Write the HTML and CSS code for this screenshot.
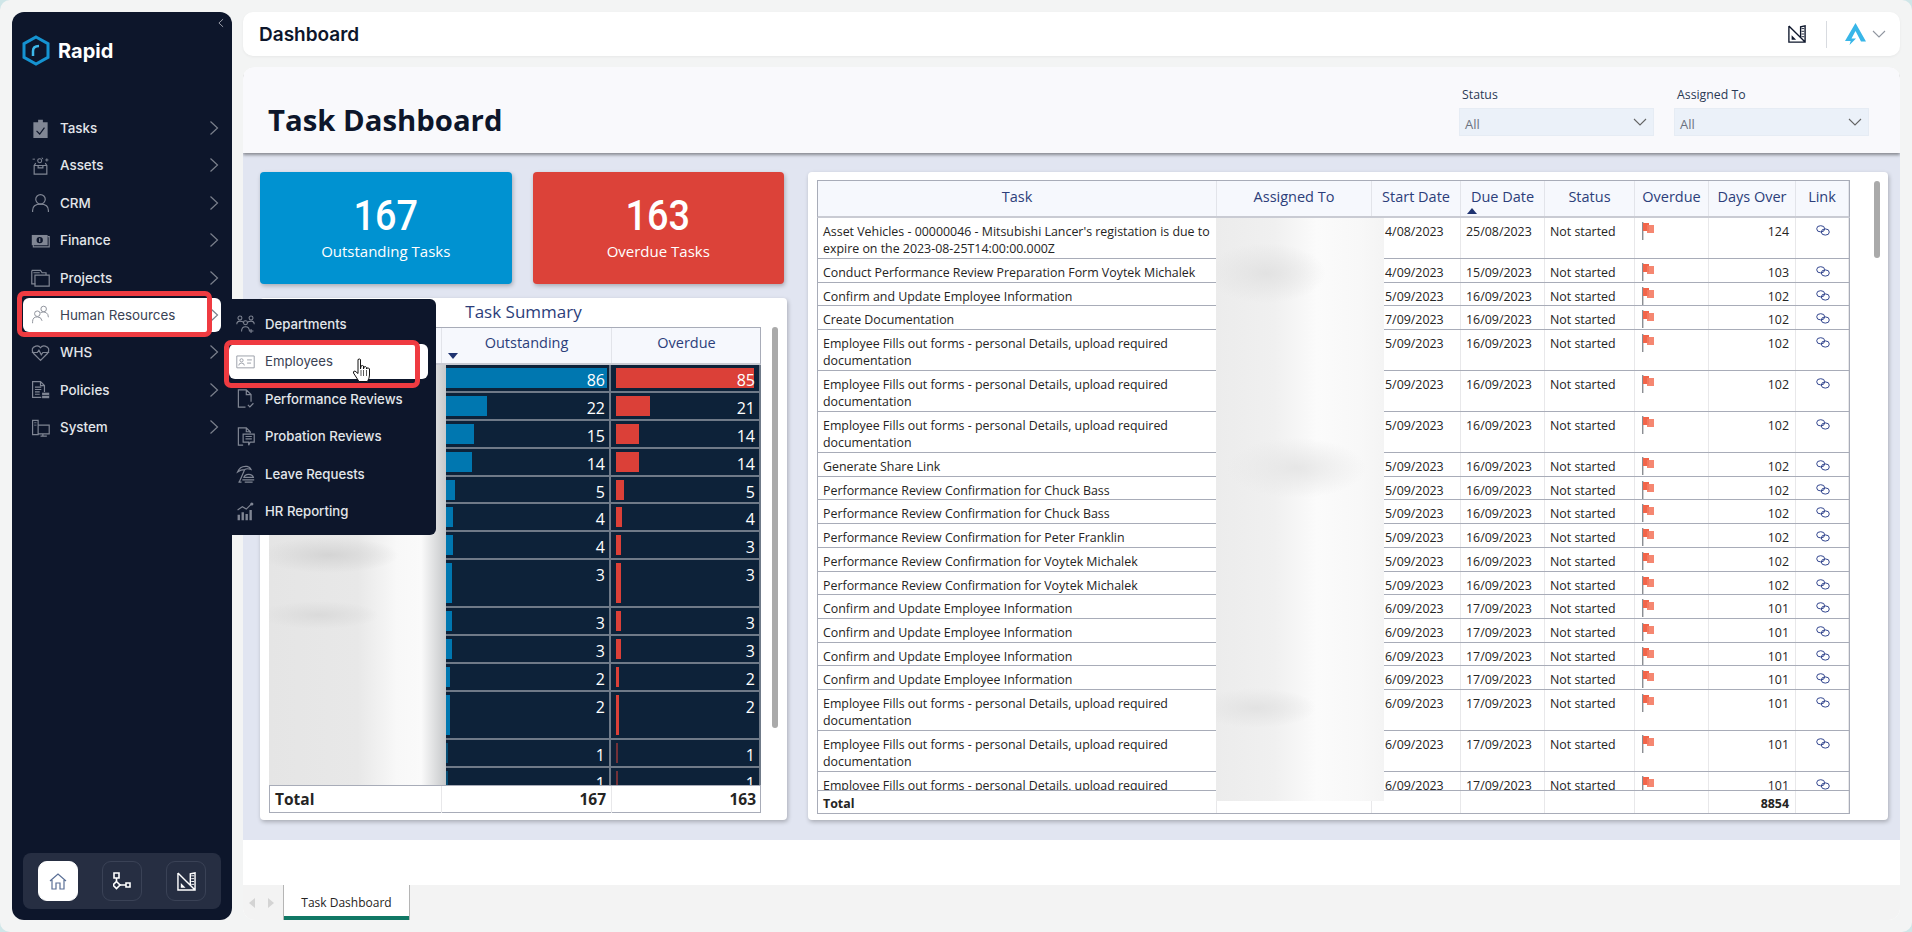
FILE: index.html
```html
<!DOCTYPE html>
<html lang="en">
<head>
    <meta charset="UTF-8">
    <title>Task Dashboard</title>
    <link rel="stylesheet" href="styles.css">
</head>
<body>
    <!-- icons used many times -->
    <svg class="defs" width="0" height="0">
        <symbol id="chev" viewBox="0 0 10 16"><path d="M1.5 1.5 8.5 8l-7 6.5" fill="none" stroke="currentColor" stroke-width="1.2"/></symbol>
        <symbol id="flag" viewBox="0 0 13 18"><path d="M.8 0v18" stroke="#5a5f66" stroke-width="1"/><path d="M1 1h6v8H1z" fill="#f2654a"/><path d="M5 3h7v8H5z" fill="#f47a62" opacity=".9"/></symbol>
        <symbol id="link" viewBox="0 0 14 11"><g fill="none" stroke="#34478f" stroke-width="1"><ellipse cx="4.7" cy="3.8" rx="4" ry="3.1"/><ellipse cx="9.3" cy="7" rx="4" ry="3.1"/></g></symbol>
        <symbol id="ruler" viewBox="0 0 20 20"><path d="M1 1v18h18V1l-5 1v12M1 1l18 18" fill="none" stroke="currentColor" stroke-width="1.5"/><path d="M4 16.500v-5l5 5z" fill="currentColor"/><path d="M15 4h3M15 7h3M15 10h3M15 13h3" stroke="currentColor" stroke-width="1"/></symbol>
        <symbol id="down" viewBox="0 0 14 8"><path d="M1 1l6 6 6-6" fill="none" stroke="currentColor" stroke-width="1.1"/></symbol>
    </svg>

    <div class="app">
        <aside class="sidebar">
            <svg class="collapse" width="6" height="10"><use href="#chev" transform="matrix(-1 0 0 1 6 0)"/></svg>
            <div class="brand">
                <svg width="28" height="31" viewBox="0 0 28 31"><path d="M14 2 26 8.700v13.600L14 29 2 22.300V8.700z" fill="none" stroke="#1593d1" stroke-width="3"/><path d="M11 21v-5q0-5 6-5" fill="none" stroke="#3db8ea" stroke-width="2.500"/></svg>
                <span>Rapid</span>
            </div>
            <nav class="nav">
                <a class="nav-item"><svg class="ico" viewBox="0 0 24 24"><path d="M3 4h6V1h6v3h6v20H3z" fill="#808694"/><path d="M7 15l4 4 6-8" fill="none" stroke="#0d162b" stroke-width="1.500"/></svg><span>Tasks</span><svg class="chev"><use href="#chev"/></svg></a>
                <a class="nav-item"><svg class="ico" viewBox="0 0 24 24"><path d="M4 12h16v11H4zM4 12l2-3M20 12l-2-3M9 12v3h6v-3" fill="none" stroke="#808694" stroke-width="1.500"/><circle cx="11" cy="6" r="2.500" fill="none" stroke="#808694" stroke-width="1.300"/><path d="M2 4h3M20 3v4M18 5h4M14 2l1 2" stroke="#808694" stroke-width="1.200"/></svg><span>Assets</span><svg class="chev"><use href="#chev"/></svg></a>
                <a class="nav-item"><svg class="ico" viewBox="0 0 24 24"><circle cx="12" cy="8" r="6" fill="none" stroke="#808694" stroke-width="1.500"/><path d="M2 24v-2q0-8 10-8t10 8v2" fill="none" stroke="#808694" stroke-width="1.500"/></svg><span>CRM</span><svg class="chev"><use href="#chev"/></svg></a>
                <a class="nav-item"><svg class="ico" viewBox="0 0 24 24"><path d="M1 5h20v13H1z" fill="#808694"/><path d="M3 18v2h20V7h-2" fill="none" stroke="#808694" stroke-width="1.500"/><ellipse cx="11" cy="11.500" rx="4" ry="4" fill="#0d162b"/><path d="M11 9v5" stroke="#808694" stroke-width="1.500"/></svg><span>Finance</span><svg class="chev"><use href="#chev"/></svg></a>
                <a class="nav-item"><svg class="ico" viewBox="0 0 24 24"><path d="M1 3h11l2 3h5v3M1 3v17h5M5 9h18v14H5zM3 6h8" fill="none" stroke="#808694" stroke-width="1.500"/></svg><span>Projects</span><svg class="chev"><use href="#chev"/></svg></a>
                <a class="nav-item active"><svg class="ico" viewBox="0 0 24 24"><g fill="none" stroke="#8b8f99" stroke-width="1.200"><circle cx="8" cy="11" r="3.500"/><path d="M2 23v-2q0-6 6-6 5 0 6 5"/><circle cx="16" cy="5" r="3.500"/><path d="M12 9.500q4-1.500 7 0 3 2 3 6"/></g></svg><span>Human Resources</span><svg class="chev"><use href="#chev"/></svg><i class="mark"></i></a>
                <a class="nav-item"><svg class="ico" viewBox="0 0 24 24"><path d="M12 22 3 13Q-1 6 6 4q4-1 6 2 2-3 6-2 7 2 3 9z" fill="none" stroke="#808694" stroke-width="1.500"/><path d="M1 12h7l2-3 3 6 2-3h8" fill="none" stroke="#808694" stroke-width="1.500"/></svg><span>WHS</span><svg class="chev"><use href="#chev"/></svg></a>
                <a class="nav-item"><svg class="ico" viewBox="0 0 24 24"><path d="M13 22H2V2h10l5 5v8M12 2v5h5" fill="none" stroke="#808694" stroke-width="1.500"/><path d="M5 9h8M5 12h8M5 15h6M5 18h6" stroke="#808694" stroke-width="1.300"/><path d="M14 16h9v7h-9z" fill="#808694"/><path d="M14 19.500h9" stroke="#0d162b"/></svg><span>Policies</span><svg class="chev"><use href="#chev"/></svg></a>
                <a class="nav-item"><svg class="ico" viewBox="0 0 24 24"><path d="M2 3h7v18H2zM9 9h14v11H9zM12 23h8M15 20v3" fill="none" stroke="#808694" stroke-width="1.500"/><path d="M4 6h3M4 9h3" stroke="#808694"/></svg><span>System</span><svg class="chev"><use href="#chev"/></svg></a>
            </nav>
            <div class="dock">
                <a class="dock-btn current"><svg width="18" height="17" viewBox="0 0 18 17"><path d="M1 8 9 1l8 7M3 7v9h4v-6h4v6h4V7" fill="none" stroke="#5a6f96" stroke-width="1.200"/></svg></a>
                <a class="dock-btn"><svg width="18" height="18" viewBox="0 0 18 18"><g fill="none" stroke="#fff" stroke-width="1.600"><path d="M1 1h5v5H1zM13 11h4v4h-4zM3.500 6v3M6.500 13H13"/><path d="M3.500 9.500 7 13l-3.500 3.500L0 13z"/></g></svg></a>
                <a class="dock-btn"><svg class="ruler" width="19" height="19"><use href="#ruler"/></svg></a>
            </div>
        </aside>

        <div class="flyout">
            <a class="fly-item"><svg class="ico" viewBox="0 0 24 24"><g fill="none" stroke="#808694" stroke-width="1.300"><circle cx="5" cy="5" r="2.500"/><circle cx="19" cy="5" r="2.500"/><circle cx="12" cy="11" r="2.500"/><path d="M1 13q0-4 4-4 3 0 5 2M23 13q0-4-4-4-3 0-5 2M7 22q0-6 5-6t5 6M19 19v5M17 21.500h5"/></g></svg><span>Departments</span></a>
            <a class="fly-item active"><svg class="ico" viewBox="0 0 24 24"><g fill="none" stroke="#9a9ea8" stroke-width="1.200"><path d="M1 5h22v15H1z"/><circle cx="7" cy="10.500" r="2"/><path d="M3.500 17q0-3 3.500-3t3.500 3M14 10h6M14 14h5"/></g></svg><span>Employees</span><i class="mark"></i></a>
            <a class="fly-item"><svg class="ico" viewBox="0 0 24 24"><path d="M12 23H3V1h10l6 6v9M13 1v6h6M15 20l2.500 2.500L22 18" fill="none" stroke="#808694" stroke-width="1.500"/></svg><span>Performance Reviews</span></a>
            <a class="fly-item"><svg class="ico" viewBox="0 0 24 24"><path d="M9 23H3V1h10l5 5v2M13 1v5h5" fill="none" stroke="#808694" stroke-width="1.500"/><path d="M9 9h14v10h-5l-2 4v-4H9z" fill="none" stroke="#808694" stroke-width="1.500"/><path d="M12 12h8M12 15h8" stroke="#808694" stroke-width="1.300"/></svg><span>Probation Reviews</span></a>
            <a class="fly-item"><svg class="ico" viewBox="0 0 24 24"><g fill="none" stroke="#808694" stroke-width="1.500"><path d="M2 10q3-8 12-7 4 1 5 4-5-2-8 0-5 0-9 3zM11 7 4 23M3 23h4"/><path d="M10 17q1-4 6-4t6 4zM8 20h15M11 23h10"/></g></svg><span>Leave Requests</span></a>
            <a class="fly-item"><svg class="ico" viewBox="0 0 24 24"><path d="M2 16h3v7H2zM7 13h3v10H7zM12 15h3v8h-3zM17 10h3v13h-3z" fill="#808694"/><path d="M2 10l6-4 5 3 7-7" fill="none" stroke="#808694" stroke-width="1.500"/><circle cx="20" cy="2.500" r="2" fill="#808694"/></svg><span>HR Reporting</span></a>
        </div>
        <svg class="hand" width="20" height="25" viewBox="0 0 20 25"><path d="M6 1.500q1.500-1 2.500 0V11l.5-3q2-1 2.500 0v3l.5-2q2-1 2.500 .5V11l.5-1q2-.5 2.500 1v6q0 3-2 6.500H7L1.500 15Q1 13 3 13l3 2.500z" fill="#fff" stroke="#111" stroke-width="1"/><path d="M9 12v6M11.500 12v6M14.500 12v6" stroke="#111" stroke-width=".7"/></svg>

        <div class="content">
            <header class="topbar">
                <h2 class="topbar-title">Dashboard</h2>
                <svg class="top-ruler" width="18" height="18"><use href="#ruler"/></svg>
                <i class="top-sep"></i>
                <svg width="21" height="22" viewBox="0 0 21 22"><path d="M10.500 0 21 18.500h-5L10.500 8 6.500 15.500H11L4.500 22l1.200-4H0z" fill="#38b6e8"/></svg>
                <svg class="top-down" width="14" height="8"><use href="#down"/></svg>
            </header>

            <main class="report">
                <div class="report-head">
                    <h1>Task Dashboard</h1>
                    <div class="filter">
                        <label>Status</label>
                        <div class="select"><span>All</span><svg width="14" height="8"><use href="#down"/></svg></div>
                    </div>
                    <div class="filter">
                        <label>Assigned To</label>
                        <div class="select"><span>All</span><svg width="14" height="8"><use href="#down"/></svg></div>
                    </div>
                </div>

                <div class="canvas">
                    <div class="col-left">
                        <div class="kpis">
                            <div class="kpi blue"><b>167</b><span>Outstanding Tasks</span></div>
                            <div class="kpi red"><b>163</b><span>Overdue Tasks</span></div>
                        </div>
                        <section class="card summary">
                            <h3>Task Summary</h3>
                            <div class="sum-table">
                                <div class="sum-row sum-head">
                                    <div></div>
                                    <div>Outstanding<i class="sort-down"></i></div>
                                    <div>Overdue</div>
                                </div>
                                <div class="sum-body">
                                    <div class="sum-row"><div></div><div class="val"><i class="bar b" style="width:161px"></i><span>86</span></div><div class="val"><i class="bar r" style="width:138px"></i><span>85</span></div></div>
                                    <div class="sum-row"><div></div><div class="val"><i class="bar b" style="width:41px"></i><span>22</span></div><div class="val"><i class="bar r" style="width:34px"></i><span>21</span></div></div>
                                    <div class="sum-row"><div></div><div class="val"><i class="bar b" style="width:28px"></i><span>15</span></div><div class="val"><i class="bar r" style="width:23px"></i><span>14</span></div></div>
                                    <div class="sum-row"><div></div><div class="val"><i class="bar b" style="width:26px"></i><span>14</span></div><div class="val"><i class="bar r" style="width:23px"></i><span>14</span></div></div>
                                    <div class="sum-row"><div></div><div class="val"><i class="bar b" style="width:9px"></i><span>5</span></div><div class="val"><i class="bar r" style="width:8px"></i><span>5</span></div></div>
                                    <div class="sum-row"><div></div><div class="val"><i class="bar b" style="width:7px"></i><span>4</span></div><div class="val"><i class="bar r" style="width:6px"></i><span>4</span></div></div>
                                    <div class="sum-row"><div></div><div class="val"><i class="bar b" style="width:7px"></i><span>4</span></div><div class="val"><i class="bar r" style="width:5px"></i><span>3</span></div></div>
                                    <div class="sum-row tall"><div></div><div class="val"><i class="bar b" style="width:6px"></i><span>3</span></div><div class="val"><i class="bar r" style="width:5px"></i><span>3</span></div></div>
                                    <div class="sum-row"><div></div><div class="val"><i class="bar b" style="width:6px"></i><span>3</span></div><div class="val"><i class="bar r" style="width:5px"></i><span>3</span></div></div>
                                    <div class="sum-row"><div></div><div class="val"><i class="bar b" style="width:6px"></i><span>3</span></div><div class="val"><i class="bar r" style="width:5px"></i><span>3</span></div></div>
                                    <div class="sum-row"><div></div><div class="val"><i class="bar b" style="width:4px"></i><span>2</span></div><div class="val"><i class="bar r" style="width:3px"></i><span>2</span></div></div>
                                    <div class="sum-row tall"><div></div><div class="val"><i class="bar b" style="width:4px"></i><span>2</span></div><div class="val"><i class="bar r" style="width:3px"></i><span>2</span></div></div>
                                    <div class="sum-row"><div></div><div class="val"><i class="bar b dim" style="width:2px"></i><span>1</span></div><div class="val"><i class="bar r dim" style="width:2px"></i><span>1</span></div></div>
                                    <div class="sum-row"><div></div><div class="val"><i class="bar b dim" style="width:2px"></i><span>1</span></div><div class="val"><i class="bar r dim" style="width:2px"></i><span>1</span></div></div>
                                </div>
                                <div class="sum-row sum-total"><div>Total</div><div>167</div><div>163</div></div>
                                <div class="blur blur-names"></div>
                            </div>
                            <i class="scroll scroll-sum"></i>
                        </section>
                    </div>

                    <section class="card tasks">
                        <div class="task-table">
                            <div class="t-row t-head">
                                <div>Task</div><div>Assigned To</div><div>Start Date</div><div>Due Date<i class="sort-up"></i></div><div>Status</div><div>Overdue</div><div>Days Over</div><div>Link</div>
                            </div>
                            <div class="t-body">
                                <div class="t-row two"><div>Asset Vehicles - 00000046 - Mitsubishi Lancer's registation is due to expire on the 2023-08-25T14:00:00.000Z</div><div></div><div class="start">4/08/2023</div><div>25/08/2023</div><div>Not started</div><div><svg class="flag"><use href="#flag"/></svg></div><div class="num">124</div><div class="mid"><svg class="link"><use href="#link"/></svg></div></div>
                                <div class="t-row"><div>Conduct Performance Review Preparation Form Voytek Michalek</div><div></div><div class="start">4/09/2023</div><div>15/09/2023</div><div>Not started</div><div><svg class="flag"><use href="#flag"/></svg></div><div class="num">103</div><div class="mid"><svg class="link"><use href="#link"/></svg></div></div>
                                <div class="t-row"><div>Confirm and Update Employee Information</div><div></div><div class="start">5/09/2023</div><div>16/09/2023</div><div>Not started</div><div><svg class="flag"><use href="#flag"/></svg></div><div class="num">102</div><div class="mid"><svg class="link"><use href="#link"/></svg></div></div>
                                <div class="t-row"><div>Create Documentation</div><div></div><div class="start">7/09/2023</div><div>16/09/2023</div><div>Not started</div><div><svg class="flag"><use href="#flag"/></svg></div><div class="num">102</div><div class="mid"><svg class="link"><use href="#link"/></svg></div></div>
                                <div class="t-row two"><div>Employee Fills out forms - personal Details, upload required documentation</div><div></div><div class="start">5/09/2023</div><div>16/09/2023</div><div>Not started</div><div><svg class="flag"><use href="#flag"/></svg></div><div class="num">102</div><div class="mid"><svg class="link"><use href="#link"/></svg></div></div>
                                <div class="t-row two"><div>Employee Fills out forms - personal Details, upload required documentation</div><div></div><div class="start">5/09/2023</div><div>16/09/2023</div><div>Not started</div><div><svg class="flag"><use href="#flag"/></svg></div><div class="num">102</div><div class="mid"><svg class="link"><use href="#link"/></svg></div></div>
                                <div class="t-row two"><div>Employee Fills out forms - personal Details, upload required documentation</div><div></div><div class="start">5/09/2023</div><div>16/09/2023</div><div>Not started</div><div><svg class="flag"><use href="#flag"/></svg></div><div class="num">102</div><div class="mid"><svg class="link"><use href="#link"/></svg></div></div>
                                <div class="t-row"><div>Generate Share Link</div><div></div><div class="start">5/09/2023</div><div>16/09/2023</div><div>Not started</div><div><svg class="flag"><use href="#flag"/></svg></div><div class="num">102</div><div class="mid"><svg class="link"><use href="#link"/></svg></div></div>
                                <div class="t-row"><div>Performance Review Confirmation for Chuck Bass</div><div></div><div class="start">5/09/2023</div><div>16/09/2023</div><div>Not started</div><div><svg class="flag"><use href="#flag"/></svg></div><div class="num">102</div><div class="mid"><svg class="link"><use href="#link"/></svg></div></div>
                                <div class="t-row"><div>Performance Review Confirmation for Chuck Bass</div><div></div><div class="start">5/09/2023</div><div>16/09/2023</div><div>Not started</div><div><svg class="flag"><use href="#flag"/></svg></div><div class="num">102</div><div class="mid"><svg class="link"><use href="#link"/></svg></div></div>
                                <div class="t-row"><div>Performance Review Confirmation for Peter Franklin</div><div></div><div class="start">5/09/2023</div><div>16/09/2023</div><div>Not started</div><div><svg class="flag"><use href="#flag"/></svg></div><div class="num">102</div><div class="mid"><svg class="link"><use href="#link"/></svg></div></div>
                                <div class="t-row"><div>Performance Review Confirmation for Voytek Michalek</div><div></div><div class="start">5/09/2023</div><div>16/09/2023</div><div>Not started</div><div><svg class="flag"><use href="#flag"/></svg></div><div class="num">102</div><div class="mid"><svg class="link"><use href="#link"/></svg></div></div>
                                <div class="t-row"><div>Performance Review Confirmation for Voytek Michalek</div><div></div><div class="start">5/09/2023</div><div>16/09/2023</div><div>Not started</div><div><svg class="flag"><use href="#flag"/></svg></div><div class="num">102</div><div class="mid"><svg class="link"><use href="#link"/></svg></div></div>
                                <div class="t-row"><div>Confirm and Update Employee Information</div><div></div><div class="start">6/09/2023</div><div>17/09/2023</div><div>Not started</div><div><svg class="flag"><use href="#flag"/></svg></div><div class="num">101</div><div class="mid"><svg class="link"><use href="#link"/></svg></div></div>
                                <div class="t-row"><div>Confirm and Update Employee Information</div><div></div><div class="start">6/09/2023</div><div>17/09/2023</div><div>Not started</div><div><svg class="flag"><use href="#flag"/></svg></div><div class="num">101</div><div class="mid"><svg class="link"><use href="#link"/></svg></div></div>
                                <div class="t-row"><div>Confirm and Update Employee Information</div><div></div><div class="start">6/09/2023</div><div>17/09/2023</div><div>Not started</div><div><svg class="flag"><use href="#flag"/></svg></div><div class="num">101</div><div class="mid"><svg class="link"><use href="#link"/></svg></div></div>
                                <div class="t-row"><div>Confirm and Update Employee Information</div><div></div><div class="start">6/09/2023</div><div>17/09/2023</div><div>Not started</div><div><svg class="flag"><use href="#flag"/></svg></div><div class="num">101</div><div class="mid"><svg class="link"><use href="#link"/></svg></div></div>
                                <div class="t-row two"><div>Employee Fills out forms - personal Details, upload required documentation</div><div></div><div class="start">6/09/2023</div><div>17/09/2023</div><div>Not started</div><div><svg class="flag"><use href="#flag"/></svg></div><div class="num">101</div><div class="mid"><svg class="link"><use href="#link"/></svg></div></div>
                                <div class="t-row two"><div>Employee Fills out forms - personal Details, upload required documentation</div><div></div><div class="start">6/09/2023</div><div>17/09/2023</div><div>Not started</div><div><svg class="flag"><use href="#flag"/></svg></div><div class="num">101</div><div class="mid"><svg class="link"><use href="#link"/></svg></div></div>
                                <div class="t-row two"><div>Employee Fills out forms - personal Details, upload required documentation</div><div></div><div class="start">6/09/2023</div><div>17/09/2023</div><div>Not started</div><div><svg class="flag"><use href="#flag"/></svg></div><div class="num">101</div><div class="mid"><svg class="link"><use href="#link"/></svg></div></div>
                            </div>
                            <div class="t-row t-total"><div>Total</div><div></div><div></div><div></div><div></div><div></div><div class="num">8854</div><div></div></div>
                            <div class="blur blur-assigned"></div>
                        </div>
                        <i class="scroll scroll-tasks"></i>
                    </section>
                </div>

                <div class="report-gap"></div>
                <footer class="tabs">
                    <i class="tri left"></i>
                    <i class="tri right"></i>
                    <a class="tab">Task Dashboard</a>
                </footer>
            </main>
        </div>
    </div>
</body>
</html>
```

FILE: styles.css
```css
/* Page */
html, body {
    margin: 0;
    height: 100%;
    overflow: hidden;
}

body {
    background-color: #cfe6e8;
    font-family: "Open Sans", sans-serif;
}

a, i {
    display: block;
    font-style: normal;
}

.defs {
    position: absolute;
}

.app {
    position: relative;
    display: flex;
    gap: 11px;
    height: 932px;
    box-sizing: border-box;
    padding: 12px;
    background-color: #f3f4f4;
    border-radius: 10px;
}

/* Sidebar */
.sidebar {
    position: relative;
    display: flex;
    flex-direction: column;
    flex: 0 0 220px;
    background-color: #0d162b;
    border-radius: 12px;
    color: #e3e6ea;
    font-family: Inter, sans-serif;
}

.collapse {
    position: absolute;
    top: 6px;
    right: 8px;
    color: #c9ccd3;
}

.brand {
    position: absolute;
    top: 23px;
    left: 10px;
    display: flex;
    align-items: center;
    gap: 8px;
    font-size: 20px;
    font-weight: 700;
    color: #fff;
}

.nav {
    display: flex;
    flex-direction: column;
    gap: 3.4px;
    margin: 99px 11px 0;
}

.nav-item {
    position: relative;
    display: flex;
    align-items: center;
    height: 34px;
    padding-left: 8px;
    border-radius: 6px;
    font-size: 13.400px;
    font-weight: 500;
}

.nav-item span {
    margin-left: 10px;
}

.ico {
    flex: none;
    width: 19px;
    height: 19px;
}

.chev {
    position: absolute;
    right: 2px;
    top: 9px;
    width: 10px;
    height: 16px;
    color: #7b808c;
}

.nav-item.active, .fly-item.active {
    background-color: #fff;
    color: #3a4254;
    font-weight: 400;
}

.mark {
    position: absolute;
    box-sizing: border-box;
    border: 5px solid #ef3b41;
    border-radius: 7px;
}

.nav-item .mark {
    left: -6px;
    top: -7px;
    width: 195px;
    height: 46px;
}

/* Dock */
.dock {
    display: flex;
    justify-content: space-between;
    margin: auto 11px 11px;
    padding: 8px 15px;
    background-color: #262e42;
    border-radius: 8px;
}

.dock-btn {
    display: flex;
    align-items: center;
    justify-content: center;
    width: 40px;
    height: 40px;
    box-sizing: border-box;
    border: 1px solid #3a4256;
    border-radius: 9px;
}

.dock-btn.current {
    background-color: #fff;
    border-color: #fff;
}

.ruler {
    color: #fff;
}

/* Flyout menu */
.flyout {
    position: absolute;
    top: 299px;
    left: 232px;
    z-index: 5;
    width: 204px;
    height: 236px;
    box-sizing: border-box;
    padding: 7px 8px 0 0;
    background-color: #0d162b;
    border-radius: 0 6px 6px 0;
    color: #e3e6ea;
    font-family: Inter, sans-serif;
    font-size: 13.200px;
    font-weight: 500;
}

.fly-item {
    position: relative;
    display: flex;
    align-items: center;
    height: 35px;
    margin-bottom: 2.5px;
    padding-left: 4px;
    border-radius: 6px;
}

.fly-item span {
    margin-left: 10px;
}

.fly-item.active {
    margin-left: -3px;
    padding-left: 7px;
}

.fly-item .mark {
    left: -5px;
    top: -4px;
    width: 196px;
    height: 48px;
}

.hand {
    position: absolute;
    left: 352px;
    top: 358px;
    z-index: 6;
}

/* Right side */
.content {
    display: flex;
    flex-direction: column;
    flex: 1;
    gap: 11px;
    min-width: 0;
}

.topbar {
    display: flex;
    align-items: center;
    height: 44px;
    flex: none;
    padding: 0 14px 0 16px;
    background-color: #fff;
    border-radius: 10px;
    box-shadow: 0 1px 3px rgba(0, 0, 0, 0.05);
}

.topbar-title {
    flex: 1;
    margin: 0;
    font-family: Inter, sans-serif;
    font-size: 19px;
    font-weight: 600;
    color: #0d162b;
}

.top-ruler {
    color: #0d162b;
}

.top-sep {
    width: 1px;
    height: 27px;
    margin: 0 18px 0 20px;
    background-color: #d8dbe0;
}

.top-down {
    margin-left: 6px;
    color: #9096a0;
}

.report {
    display: flex;
    flex-direction: column;
    flex: 1;
    min-height: 0;
    border-radius: 12px;
    overflow: hidden;
    background-color: #fff;
}

.report-head {
    position: relative;
    z-index: 1;
    display: flex;
    align-items: flex-start;
    gap: 20px;
    flex: none;
    height: 86px;
    padding-right: 31px;
    background-color: #f9f9fc;
    box-shadow: 0 2px 3px rgba(0, 0, 0, 0.4);
}

.report-head h1 {
    flex: 1;
    margin: 31px 0 0 25px;
    font-size: 29.300px;
    line-height: 44px;
    font-weight: 700;
    color: #0d162b;
}

.filter {
    width: 195px;
    margin-top: 18px;
}

.filter label {
    display: block;
    height: 23px;
    padding: 1px 0 0 3px;
    box-sizing: border-box;
    font-size: 12.300px;
    line-height: 18px;
    color: #2b3a55;
}

.select {
    display: flex;
    align-items: center;
    justify-content: space-between;
    height: 28px;
    box-sizing: border-box;
    padding: 0 6px 0 5px;
    background-color: #ebf1f9;
    border: 1px solid #e6ecf4;
    font-size: 13px;
    color: #6b7280;
}

.select span {
    padding-top: 3px;
}

.select svg {
    color: #666;
}

/* Canvas */
.canvas {
    display: flex;
    gap: 21px;
    flex: none;
    height: 687px;
    box-sizing: border-box;
    padding: 19px 21px 20px 17px;
    background-color: #e1e5f1;
}

.col-left {
    display: flex;
    flex-direction: column;
    gap: 14px;
    flex: 0 0 527px;
}

.kpis {
    display: flex;
    gap: 21px;
    width: 524px;
}

.kpi {
    display: flex;
    flex-direction: column;
    align-items: center;
    flex: 1;
    height: 112px;
    border-radius: 4px;
    box-shadow: 1px 2px 4px rgba(0, 0, 0, 0.25);
    color: #fff;
}

.kpi b {
    margin-top: 19px;
    font-family: Roboto, sans-serif;
    font-size: 42px;
    line-height: 50px;
    font-weight: 500;
    transform: scaleX(0.9);
}

.kpi span {
    margin-top: -1px;
    font-size: 15px;
    line-height: 22px;
}

.kpi.blue { background-color: #0092d1; }
.kpi.red { background-color: #dc4239; }

.card {
    position: relative;
    background-color: #fff;
    border-radius: 4px;
    box-shadow: 1px 2px 4px rgba(0, 0, 0, 0.25);
}

/* Task Summary */
.summary {
    flex: 1;
    padding: 0 9px;
}

.summary h3 {
    height: 29px;
    margin: 0;
    font-size: 17px;
    line-height: 28px;
    font-weight: 400;
    text-align: center;
    color: #2c3e7a;
}

.sum-table {
    position: relative;
    width: 492px;
    height: 486px;
    overflow: hidden;
    box-sizing: border-box;
}

.sum-row {
    display: grid;
    grid-template-columns: 172px 170px 150px;
    height: 27.9px;
    box-sizing: border-box;
    border-bottom: 2px solid #6f7a88;
    background-color: #0d2239;
}

.sum-row.tall {
    height: 48px;
}

.sum-head {
    height: 38px;
    background-color: #f6f8fd;
    border: 1px solid #a8acb8;
    border-bottom: 2px solid #c9cbd3;
    color: #2c3e7a;
    font-size: 14.500px;
    line-height: 29px;
    text-align: center;
}

.sum-head > div {
    position: relative;
    border-right: 1px solid #e2e4ea;
}

.sort-down {
    position: absolute;
    left: 6px;
    top: 25px;
    border: 5px solid transparent;
    border-top: 6px solid #1f3370;
    border-bottom: 0;
}

.sum-body {
    height: 420px;
    overflow: hidden;
}

.val {
    position: relative;
    border-right: 2px solid #6f7a88;
    padding-top: 4px;
    font-size: 16px;
    line-height: 22px;
    text-align: right;
    color: #fff;
}

.val span {
    position: relative;
    padding-right: 4px;
}

.bar {
    position: absolute;
    left: 5px;
    top: 3px;
    bottom: 3px;
}

.bar.b { background-color: #0077b0; }
.bar.r { background-color: #db4038; }
.bar.dim { opacity: 0.5; }

.sum-total {
    height: 28px;
    background-color: #fff;
    border: 1px solid #a8acb8;
    font-size: 15.500px;
    line-height: 27px;
    font-weight: 700;
    color: #252423;
    text-align: right;
}

.sum-total > div {
    padding: 0 5px;
    border-right: 1px solid #e8e8ea;
}

.sum-total > div:first-child {
    text-align: left;
}

.blur {
    position: absolute;
}

.blur-names {
    left: 0;
    top: 38px;
    width: 177px;
    height: 420px;
    background:
        radial-gradient(ellipse 70px 18px at 60px 190px, #d4d4d4, transparent),
        radial-gradient(ellipse 60px 14px at 50px 250px, #dadada, transparent),
        linear-gradient(to right, #e5e5e5 0, #e8e8e8 50%, #f8f8f8 72%, #fafafa 86%, #c6c8ca 100%);
}

.blur-assigned {
    left: 399px;
    top: 38px;
    width: 168px;
    height: 583px;
    background:
        radial-gradient(ellipse 60px 30px at 50px 55px, #e2e2e2, transparent),
        radial-gradient(ellipse 70px 30px at 80px 250px, #e6e6e6, transparent),
        radial-gradient(ellipse 60px 20px at 40px 490px, #e2e2e2, transparent),
        linear-gradient(to right, #ececec 0, #f0f0f0 35%, #fbfbfb 60%, #f8f8f8 85%, #f4f4f4 100%);
}

.scroll {
    position: absolute;
    width: 6px;
    background-color: #aaa;
    border-radius: 3px;
}

.scroll-sum {
    right: 9px;
    top: 29px;
    height: 401px;
}

.scroll-tasks {
    right: 8px;
    top: 9px;
    height: 77px;
}

/* Task table */
.tasks {
    flex: 0 0 1071px;
    padding: 8px 0 0 9px;
}

.task-table {
    position: relative;
    width: 1033px;
    height: 634px;
    box-sizing: border-box;
    overflow: hidden;
}

.t-row {
    display: grid;
    grid-template-columns: 399px 155px 89px 84px 90px 74px 87px 1fr;
    height: 23.7px;
    box-sizing: border-box;
    border: 1px solid #a8acb8;
    border-width: 0 1px 1px;
    font-size: 12.400px;
    line-height: 17px;
    color: #252423;
}

.t-row > div {
    padding: 5px 0 0 5px;
    border-right: 1px solid #e8e8ea;
    white-space: normal;
}

.t-row.two {
    height: 41px;
}

.t-head {
    height: 38px;
    background-color: #f6f8fd;
    border-width: 1px 1px 2px;
    border-bottom-color: #c9cbd3;
    color: #2c3e7a;
    font-size: 14.500px;
    line-height: 25px;
    text-align: center;
}

.t-head > div {
    position: relative;
    padding: 3px 0 0;
    border-right-color: #e2e4ea;
}

.sort-up {
    position: absolute;
    left: 6px;
    top: 27px;
    border: 5px solid transparent;
    border-bottom: 6px solid #1f3370;
    border-top: 0;
}

.t-body {
    height: 572px;
    overflow: hidden;
}

.t-row > .start {
    padding-left: 13px;
    overflow: hidden;
}

.t-row > .num {
    text-align: right;
    padding-right: 6px;
}

.t-row > .mid {
    text-align: center;
}

.t-row > div > .flag {
    display: block;
    width: 13px;
    height: 18px;
    margin: -1px 0 0 2px;
}

.link {
    display: block;
    width: 14px;
    height: 11px;
    margin: 2px auto 0 15px;
}

.t-total {
    height: 24px;
    border-width: 1px;
    font-weight: 700;
}

.t-total > div {
    padding-top: 4px;
}

/* Bottom tabs */
.report-gap {
    flex: 0 0 45px;
    background-color: #fff;
}

.tabs {
    display: flex;
    align-items: stretch;
    flex: 0 0 35px;
    background-color: #f3f3f3;
}

.tri {
    align-self: center;
    margin-left: 6px;
    border: 5px solid transparent;
    border-left: 0;
    border-right: 6px solid #d4d4d4;
}

.tri.right {
    margin-left: 13px;
    border-right: 0;
    border-left: 6px solid #d4d4d4;
}

.tab {
    margin-left: 9px;
    width: 127px;
    box-sizing: border-box;
    background-color: #fff;
    border: 1px solid #b5b5b5;
    border-width: 0 1px;
    box-shadow: inset 0 -4px 0 #117865;
    font-size: 12px;
    line-height: 35px;
    text-align: center;
    color: #252423;
}
```
